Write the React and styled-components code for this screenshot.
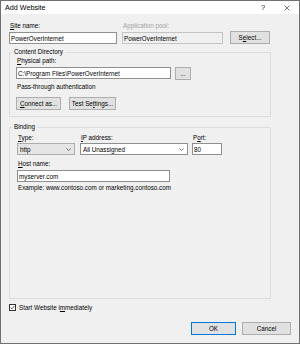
import React from 'react'
import styled, { createGlobalStyle } from 'styled-components'

const GlobalStyle = createGlobalStyle`
  html, body { margin: 0; padding: 0; background: #ffffff; }
  * { box-sizing: border-box; }
`

const Window = styled.div`
  width: 300px;
  height: 344px;
  border: 1px solid #707070;
  background: #f0f0f0;
  display: flex;
  flex-direction: column;
  font-family: "Segoe UI", "Liberation Sans", Arial, sans-serif;
  font-size: 6.3px;
  color: #000;
  overflow: hidden;
`

const TitleBar = styled.div`
  height: 13px;
  flex-shrink: 0;
  background: #ffffff;
  display: flex;
  align-items: center;
  padding-left: 4px;
  font-size: 7.2px;
`

const Title = styled.span`
  flex: 1;
`

const TitleButton = styled.div`
  width: 24px;
  height: 13px;
  display: flex;
  align-items: center;
  justify-content: center;
  font-size: 7.5px;
  color: #222;
`

const Body = styled.div`
  flex: 1;
  display: flex;
  flex-direction: column;
  padding: 8px 8px 8px 7px;
`

const Row = styled.div`
  display: flex;
  align-items: ${p => p.$align || 'flex-start'};
  margin-top: ${p => p.$mt || 0}px;
`

const Field = styled.div`
  display: flex;
  flex-direction: column;
  gap: ${p => (p.$gap ?? 2)}px;
  width: ${p => p.$w}px;
  margin-left: ${p => p.$ml || 0}px;
  margin-top: ${p => p.$mt || 0}px;
`

const Label = styled.span`
  display: block;
  height: 8px;
  line-height: 8px;
  padding-left: 1px;
  white-space: nowrap;
  color: ${p => (p.$disabled ? '#a3a3a3' : '#000')};
`

const Key = styled.span`
  text-decoration: underline;
  text-underline-offset: 0.5px;
`

const TextBox = styled.div`
  width: ${p => (p.$w ? `${p.$w}px` : '100%')};
  height: 12px;
  border: 1px solid ${p => (p.$readOnly ? '#c4c4c4' : '#8f8f8f')};
  background: ${p => (p.$readOnly ? '#f0f0f0' : '#ffffff')};
  display: flex;
  align-items: center;
  padding: 0 1px;
  white-space: nowrap;
  overflow: hidden;
`

const Button = styled.div`
  width: ${p => p.$w}px;
  height: 13px;
  margin-left: ${p => p.$ml || 0}px;
  border: 1px solid ${p => (p.$primary ? '#0078d7' : '#adadad')};
  background: #e1e1e1;
  display: flex;
  align-items: center;
  justify-content: center;
  white-space: nowrap;
`

const Group = styled.fieldset`
  margin: ${p => p.$mt || 0}px 0 0 1px;
  width: 262px;
  min-width: 0;
  height: ${p => (p.$h ? `${p.$h}px` : 'auto')};
  border: 1px solid #dcdcdc;
  padding: ${p => p.$pt || 0}px 6px ${p => p.$pb || 0}px ${p => p.$pl || 6}px;
`

const Legend = styled.legend`
  line-height: 8px;
  padding: 0 2px;
  margin-left: ${p => p.$ml || -4}px;
`

const Note = styled.div`
  height: 8px;
  line-height: 8px;
  padding-left: 1px;
  margin-top: ${p => p.$mt || 0}px;
  white-space: nowrap;
`

const Select = styled.div`
  width: 100%;
  height: 12px;
  border: 1px solid ${p => (p.$combo ? '#adadad' : '#8f8f8f')};
  background: ${p => (p.$combo ? '#e5e5e5' : '#ffffff')};
  display: flex;
  align-items: center;
  justify-content: space-between;
  padding: 0 3px 0 2px;
  white-space: nowrap;
`

const Chevron = () => (
  <svg width="5" height="3" viewBox="0 0 5 3">
    <path d="M0.4 0.4 L2.5 2.5 L4.6 0.4" fill="none" stroke="#444" strokeWidth="0.7" />
  </svg>
)

const CheckRow = styled.div`
  display: flex;
  align-items: center;
  height: 8px;
  margin-top: 4px;
  margin-left: 1px;
`

const CheckBox = styled.div`
  width: 7px;
  height: 7px;
  border: 1px solid #333;
  background: #fff;
  display: flex;
  align-items: center;
  justify-content: center;
  margin-right: 3px;
`

const Footer = styled.div`
  margin-top: auto;
  display: flex;
  justify-content: flex-end;
  gap: 6px;
`

export default function App() {
  return (
    <>
      <GlobalStyle />
      <Window>
        <TitleBar>
          <Title>Add Website</Title>
          <TitleButton>?</TitleButton>
          <TitleButton>
            <svg width="6" height="6" viewBox="0 0 6 6">
              <path d="M0.5 0.5 L5.5 5.5 M5.5 0.5 L0.5 5.5" stroke="#222" strokeWidth="0.6" />
            </svg>
          </TitleButton>
        </TitleBar>
        <Body>
          <Row $align="flex-end">
            <Field $w={108} $ml={1}>
              <Label><Key>S</Key>ite name:</Label>
              <TextBox>PowerOverInternet</TextBox>
            </Field>
            <Field $w={101} $ml={5}>
              <Label $disabled>Application pool:</Label>
              <TextBox $readOnly>PowerOverInternet</TextBox>
            </Field>
            <Button $w={40} $ml={7}>S<Key>e</Key>lect...</Button>
          </Row>

          <Group $mt={4} $pt={1} $pb={6}>
            <Legend>Content Directory</Legend>
            <Field>
              <Label><Key>P</Key>hysical path:</Label>
              <Row>
                <TextBox $w={155}>C:\Program Files\PowerOverInternet</TextBox>
                <Button $w={16} $ml={4}>...</Button>
              </Row>
            </Field>
            <Note $mt={3}>Pass-through authentication</Note>
            <Row $mt={6}>
              <Button $w={45}><Key>C</Key>onnect as...</Button>
              <Button $w={47} $ml={8}>Test Se<Key>t</Key>tings...</Button>
            </Row>
          </Group>

          <Group $mt={6} $pt={3} $pl={7} $h={176}>
            <Legend $ml={-5}>Binding</Legend>
            <Row>
              <Field $w={58} $gap={1}>
                <Label><Key>T</Key>ype:</Label>
                <Select $combo>
                  <span>http</span>
                  <Chevron />
                </Select>
              </Field>
              <Field $w={108} $ml={5} $gap={1}>
                <Label><Key>I</Key>P address:</Label>
                <Select>
                  <span>All Unassigned</span>
                  <Chevron />
                </Select>
              </Field>
              <Field $w={30} $ml={4} $gap={1}>
                <Label>P<Key>o</Key>rt:</Label>
                <TextBox>80</TextBox>
              </Field>
            </Row>
            <Field $w={153} $mt={5}>
              <Label><Key>H</Key>ost name:</Label>
              <TextBox>myserver.com</TextBox>
            </Field>
            <Note $mt={2}>Example: www.contoso.com or marketing.contoso.com</Note>
          </Group>

          <CheckRow>
            <CheckBox>
              <svg width="5" height="5" viewBox="0 0 5 5">
                <path d="M0.6 2.6 L1.9 3.9 L4.4 1" fill="none" stroke="#333" strokeWidth="0.8" />
              </svg>
            </CheckBox>
            <span>Start Website i<Key>m</Key>mediately</span>
          </CheckRow>

          <Footer>
            <Button $w={45} $primary>OK</Button>
            <Button $w={49}>Cancel</Button>
          </Footer>
        </Body>
      </Window>
    </>
  )
}
